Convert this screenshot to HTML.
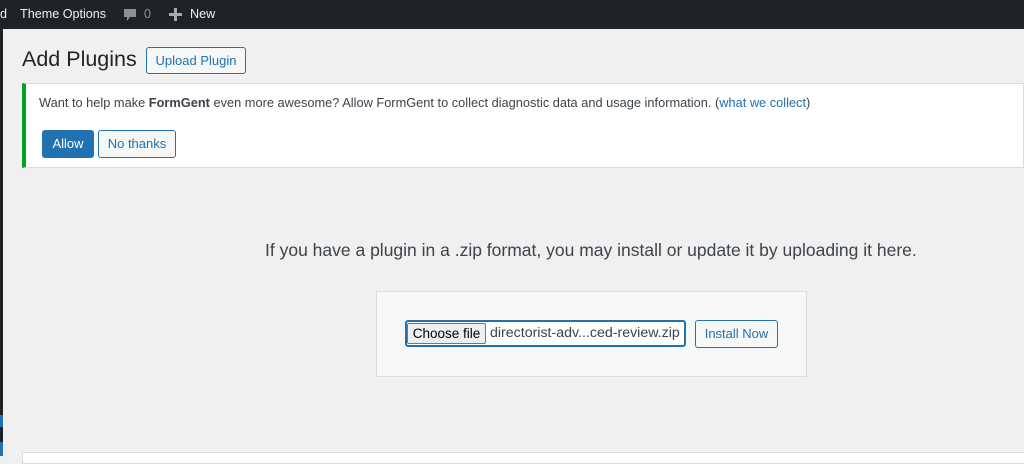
<!DOCTYPE html>
<html><head><style>
body{margin:0;width:1024px;height:456px;overflow:hidden;background:#f0f0f1;font-family:"Liberation Sans",sans-serif;position:relative}
.bar{position:absolute;left:0;top:0;width:1024px;height:29px;background:#1d2327;color:#f0f0f1;font-size:12.6px}
.bar span{position:absolute;top:7px}
.side{position:absolute;left:0;top:29px;width:3px;height:427px;background:#1d2327}
.btn{position:absolute;border:1px solid #2271b1;border-radius:3px;color:#2271b1;background:#f6f7f7;font-size:13px;box-sizing:border-box;text-align:center}
</style></head><body>
<div class="bar">
<span style="left:0">d</span>
<span style="left:20px">Theme Options</span>
<svg style="position:absolute;left:122px;top:7px" width="16" height="16" viewBox="0 0 16 16"><path d="M2 2h12v8H8l-3 4v-4H2z" fill="#8c8f94"/></svg>
<span style="left:144px;color:#8c8f94">0</span>
<svg style="position:absolute;left:169px;top:8px" width="13" height="13" viewBox="0 0 13 13"><path d="M5 0h3v5h5v3H8v5H5V8H0V5h5z" fill="#a7aaad"/></svg>
<span style="left:190px">New</span>
</div>
<div class="side"></div>
<div style="position:absolute;left:0;top:415px;width:3px;height:12px;background:#2271b1"></div>
<div style="position:absolute;left:0;top:442px;width:3px;height:14px;background:#2271b1"></div>
<div style="position:absolute;left:22px;top:47px;font-size:21.5px;color:#1d2327">Add Plugins</div>
<div class="btn" style="left:146px;top:47px;width:100px;height:27px;line-height:25px">Upload Plugin</div>
<div style="position:absolute;left:22px;top:83px;width:1002px;height:85px;background:#fff;border:1px solid #dcdcde;border-left:4px solid #00a32a;box-sizing:border-box"></div>
<div style="position:absolute;left:39px;top:95px;font-size:12.8px;color:#3c434a">Want to help make <b>FormGent</b> even more awesome? Allow FormGent to collect diagnostic data and usage information. (<span style="color:#2271b1">what we collect</span>)</div>
<div class="btn" style="left:42px;top:130px;width:52px;height:28px;line-height:26px;background:#2271b1;color:#fff">Allow</div>
<div class="btn" style="left:98px;top:130px;width:78px;height:28px;line-height:26px">No thanks</div>
<div style="position:absolute;left:265px;top:240px;font-size:17.5px;color:#3c434a;white-space:nowrap">If you have a plugin in a .zip format, you may install or update it by uploading it here.</div>
<div style="position:absolute;left:376px;top:291px;width:431px;height:86px;background:#f6f7f7;border:1px solid #dcdcde;box-sizing:border-box"></div>
<div style="position:absolute;left:405px;top:320px;width:281px;height:27px;border:2px solid #2271b1;border-radius:3px;background:#fff;box-sizing:border-box"></div>
<div style="position:absolute;left:407px;top:323px;width:79px;height:21px;border:1px solid #767676;border-radius:2px;background:#efefef;box-sizing:border-box;font-size:13.5px;text-align:center;line-height:19px;color:#000">Choose file</div>
<div style="position:absolute;left:490px;top:325px;font-size:14.2px;color:#3c434a;white-space:nowrap">directorist-adv...ced-review.zip</div>
<div class="btn" style="left:695px;top:320px;width:83px;height:28px;line-height:26px">Install Now</div>
<div style="position:absolute;left:22px;top:452px;width:1002px;height:10px;background:#fff;border:1px solid #dcdcde"></div>
</body></html>
